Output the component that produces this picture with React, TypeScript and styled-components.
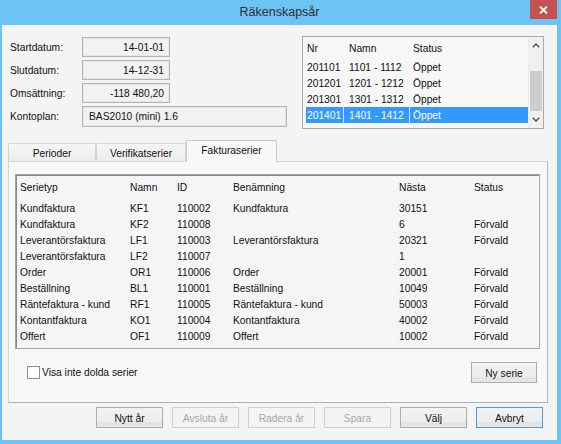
import React from "react";
import styled, { createGlobalStyle, css } from "styled-components";

const Global = createGlobalStyle`
  html, body { margin: 0; padding: 0; background: #6cc4f5; }
  body {
    font-family: "Liberation Sans", Arial, sans-serif;
    font-size: 10.25px;
    color: #111;
  }
  * { box-sizing: border-box; }
`;

const Window = styled.div`
  width: 561px;
  height: 444px;
  background: #6cc4f5;
  display: flex;
  flex-direction: column;
  padding: 0 4px 4px 2px;
`;

const TitleBar = styled.div`
  height: 25px;
  display: grid;
  grid-template-columns: 1fr auto 1fr;
  align-items: start;
`;

const Title = styled.div`
  grid-column: 2;
  font-size: 12.5px;
  color: #2e2e2e;
  line-height: 24px;
`;

const CloseBtn = styled.div`
  grid-column: 3;
  justify-self: end;
  width: 27px;
  height: 19px;
  background: #c75050;
  display: flex;
  align-items: center;
  justify-content: center;
`;

const Client = styled.div`
  flex: 1;
  background: #f4f4f4;
  display: flex;
  flex-direction: column;
`;

const TopSection = styled.div`
  display: flex;
  gap: 15px;
  padding: 11px 0 0 8px;
`;

const FieldGrid = styled.div`
  display: grid;
  grid-template-columns: 72px auto;
  grid-template-rows: 20px 20px 20px 21px;
  row-gap: 3px;
  margin-top: 1px;
  align-items: center;
`;

const Label = styled.div`
  padding-left: 0;
`;

const Input = styled.div<{ $wide?: boolean }>`
  height: 100%;
  width: ${(p) => (p.$wide ? "205px" : "88px")};
  border: 1px solid #b3b3b3;
  box-shadow: inset 0 0 0 1px #e6e6e6;
  background: #f2f2f2;
  display: flex;
  align-items: center;
  justify-content: ${(p) => (p.$wide ? "flex-start" : "flex-end")};
  padding: ${(p) => (p.$wide ? "0 0 0 6px" : "0 5px 0 0")};
`;

const ListBox = styled.div`
  width: 242px;
  height: 93px;
  border: 1px solid #a9a9a9;
  background: #f7f7f7;
  display: flex;
`;

const ListBody = styled.div`
  flex: 1;
  padding-left: 3px;
  display: flex;
  flex-direction: column;
`;

const ListRow = styled.div<{ $head?: boolean; $sel?: boolean }>`
  display: grid;
  grid-template-columns: 37px 66px 1fr;
  height: ${(p) => (p.$head ? "22px" : "16px")};
  align-items: center;
  ${(p) =>
    p.$sel &&
    css`
      background: #3399ff;
      color: #fff;
    `}
`;

const ListCell = styled.div<{ $i: number; $sel?: boolean }>`
  height: 100%;
  display: flex;
  align-items: center;
  white-space: nowrap;
  padding-left: ${(p) => (p.$i === 0 ? "1px" : p.$i === 1 ? "5px" : "3px")};
  border-left: ${(p) =>
    p.$i === 0 ? "none" : `1px solid ${p.$sel ? "rgba(255,255,255,0.75)" : "transparent"}`};
`;

const ScrollBar = styled.div`
  width: 15px;
  background: #f0f0f0;
  border-left: 1px solid #ececec;
  display: flex;
  flex-direction: column;
`;

const ScrollArrow = styled.div`
  height: 17px;
  display: flex;
  align-items: center;
  justify-content: center;
`;

const ScrollTrack = styled.div`
  flex: 1;
  display: flex;
  flex-direction: column;
  justify-content: flex-end;
  padding: 0 1px;
`;

const ScrollThumb = styled.div`
  height: 40px;
  background: #cdcdcd;
`;

const TabsRow = styled.div`
  display: flex;
  align-items: flex-end;
  height: 21px;
  margin-top: 11px;
  padding-left: 6px;
  position: relative;
  z-index: 1;
`;

const Tab = styled.div<{ $w: number; $active?: boolean }>`
  width: ${(p) => p.$w}px;
  height: 18px;
  border: 1px solid #d6d6d6;
  border-bottom: none;
  border-radius: 2px 2px 0 0;
  background: linear-gradient(#f5f5f5, #ededed);
  display: flex;
  align-items: center;
  justify-content: center;
  padding-top: 1px;
  ${(p) =>
    p.$active &&
    css`
      height: 22px;
      margin-bottom: -1px;
      background: #f8f8f8;
      border-color: #c8c8c8;
      padding-top: 0;
      padding-bottom: 2px;
    `}
`;

const Panel = styled.div`
  height: 242px;
  margin: 0 9px 0 6px;
  border: 1px solid;
  border-color: #d6d6d6 #b6b6b6 #b0b0b0 #d6d6d6;
  background: #f8f8f8;
  padding: 12px 7px 0 6px;
  display: flex;
  flex-direction: column;
`;

const Table = styled.div`
  height: 175px;
  border: 1px solid #a6a6a6;
  box-shadow: inset 1px 1px 0 #8a8a8a;
  background: #f5f5f5;
  padding-left: 4px;
  display: flex;
  flex-direction: column;
`;

const TRow = styled.div<{ $head?: boolean }>`
  display: grid;
  grid-template-columns: 110px 47px 56px 166px 75px 1fr;
  height: ${(p) => (p.$head ? "25px" : "16.1px")};
  align-items: center;
  white-space: nowrap;
`;

const PanelFooter = styled.div`
  margin-top: 13px;
  height: 21px;
  display: flex;
  align-items: center;
  justify-content: space-between;
  padding: 0 3px 0 12px;
`;

const CheckLabel = styled.label`
  display: flex;
  align-items: center;
  gap: 2px;
`;

const CheckBox = styled.span`
  width: 13px;
  height: 13px;
  border: 1px solid #8f8f8f;
  background: #fff;
`;

const Button = styled.div<{ $w?: number; $disabled?: boolean; $default?: boolean }>`
  width: ${(p) => p.$w ?? 67}px;
  height: 21px;
  border: 1px solid #adadad;
  background: linear-gradient(#f2f2f2 0%, #ececec 75%, #e2e2e2 76%, #e6e6e6 100%);
  display: flex;
  align-items: center;
  justify-content: center;
  padding-top: 1px;
  ${(p) =>
    p.$disabled &&
    css`
      color: #a6a6a6;
      border-color: #cfcfcf;
      background: #f4f4f4;
    `}
  ${(p) =>
    p.$default &&
    css`
      border-color: #4a9be0;
    `}
`;

const ButtonRow = styled.div`
  margin-top: 4px;
  display: flex;
  justify-content: flex-end;
  gap: 9px;
  padding-right: 14px;
`;

const years = [
  ["201101", "1101 - 1112", "Öppet"],
  ["201201", "1201 - 1212", "Öppet"],
  ["201301", "1301 - 1312", "Öppet"],
  ["201401", "1401 - 1412", "Öppet"],
];

const series = [
  ["Kundfaktura", "KF1", "110002", "Kundfaktura", "30151", ""],
  ["Kundfaktura", "KF2", "110008", "", "6", "Förvald"],
  ["Leverantörsfaktura", "LF1", "110003", "Leverantörsfaktura", "20321", "Förvald"],
  ["Leverantörsfaktura", "LF2", "110007", "", "1", ""],
  ["Order", "OR1", "110006", "Order", "20001", "Förvald"],
  ["Beställning", "BL1", "110001", "Beställning", "10049", "Förvald"],
  ["Räntefaktura - kund", "RF1", "110005", "Räntefaktura - kund", "50003", "Förvald"],
  ["Kontantfaktura", "KO1", "110004", "Kontantfaktura", "40002", "Förvald"],
  ["Offert", "OF1", "110009", "Offert", "10002", "Förvald"],
];

const Chevron = ({ up }: { up?: boolean }) => (
  <svg width="8" height="5" viewBox="0 0 8 5">
    <polyline
      points={up ? "0.8,4.2 4,1 7.2,4.2" : "0.8,0.8 4,4 7.2,0.8"}
      fill="none"
      stroke="#555"
      strokeWidth="1.5"
    />
  </svg>
);

export default function App() {
  return (
    <>
      <Global />
      <Window>
        <TitleBar>
          <Title>Räkenskapsår</Title>
          <CloseBtn>
            <svg width="9" height="8" viewBox="0 0 9 8">
              <path d="M1 0.5 L8 7.5 M8 0.5 L1 7.5" stroke="#fff" strokeWidth="1.8" />
            </svg>
          </CloseBtn>
        </TitleBar>
        <Client>
          <TopSection>
            <FieldGrid>
              <Label>Startdatum:</Label>
              <Input>14-01-01</Input>
              <Label>Slutdatum:</Label>
              <Input>14-12-31</Input>
              <Label>Omsättning:</Label>
              <Input>-118 480,20</Input>
              <Label>Kontoplan:</Label>
              <Input $wide>BAS2010 (mini) 1.6</Input>
            </FieldGrid>
            <ListBox>
              <ListBody>
                <ListRow $head>
                  <ListCell $i={0}>Nr</ListCell>
                  <ListCell $i={1}>Namn</ListCell>
                  <ListCell $i={2}>Status</ListCell>
                </ListRow>
                {years.map((r, i) => {
                  const sel = i === years.length - 1;
                  return (
                    <ListRow key={r[0]} $sel={sel}>
                      {r.map((c, j) => (
                        <ListCell key={j} $i={j} $sel={sel}>
                          {c}
                        </ListCell>
                      ))}
                    </ListRow>
                  );
                })}
              </ListBody>
              <ScrollBar>
                <ScrollArrow>
                  <Chevron up />
                </ScrollArrow>
                <ScrollTrack>
                  <ScrollThumb />
                </ScrollTrack>
                <ScrollArrow>
                  <Chevron />
                </ScrollArrow>
              </ScrollBar>
            </ListBox>
          </TopSection>

          <TabsRow>
            <Tab $w={88}>Perioder</Tab>
            <Tab $w={90}>Verifikatserier</Tab>
            <Tab $w={91} $active>
              Fakturaserier
            </Tab>
          </TabsRow>
          <Panel>
            <Table>
              <TRow $head>
                <div>Serietyp</div>
                <div>Namn</div>
                <div>ID</div>
                <div>Benämning</div>
                <div>Nästa</div>
                <div>Status</div>
              </TRow>
              {series.map((r, i) => (
                <TRow key={i}>
                  {r.map((c, j) => (
                    <div key={j}>{c}</div>
                  ))}
                </TRow>
              ))}
            </Table>
            <PanelFooter>
              <CheckLabel>
                <CheckBox />
                <span>Visa inte dolda serier</span>
              </CheckLabel>
              <Button $w={66}>Ny serie</Button>
            </PanelFooter>
          </Panel>
          <ButtonRow>
            <Button>Nytt år</Button>
            <Button $disabled>Avsluta år</Button>
            <Button $disabled>Radera år</Button>
            <Button $disabled>Spara</Button>
            <Button>Välj</Button>
            <Button $default>Avbryt</Button>
          </ButtonRow>
        </Client>
      </Window>
    </>
  );
}
